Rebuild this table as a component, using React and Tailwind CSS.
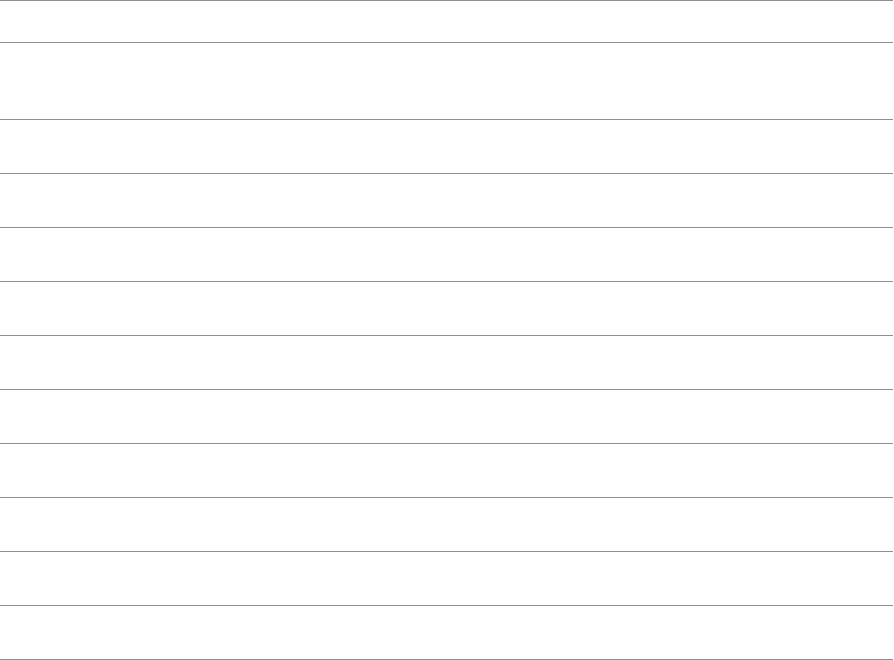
export default function App() {
  const rows = Array.from({ length: 10 });
  return (
    <div className="w-[894px] h-[660px] overflow-hidden bg-white" style={{ fontFamily: '"Liberation Sans", sans-serif' }}>
      <div className="mr-px border-t border-[#8f8f8f]">
        <div className="h-[42px] border-b border-[#8f8f8f]" />
        <div className="h-[77px] border-b border-[#8f8f8f]" />
        {rows.map((_, i) => (
          <div key={i} className="h-[54px] border-b border-[#8f8f8f]" />
        ))}
      </div>
    </div>
  );
}
